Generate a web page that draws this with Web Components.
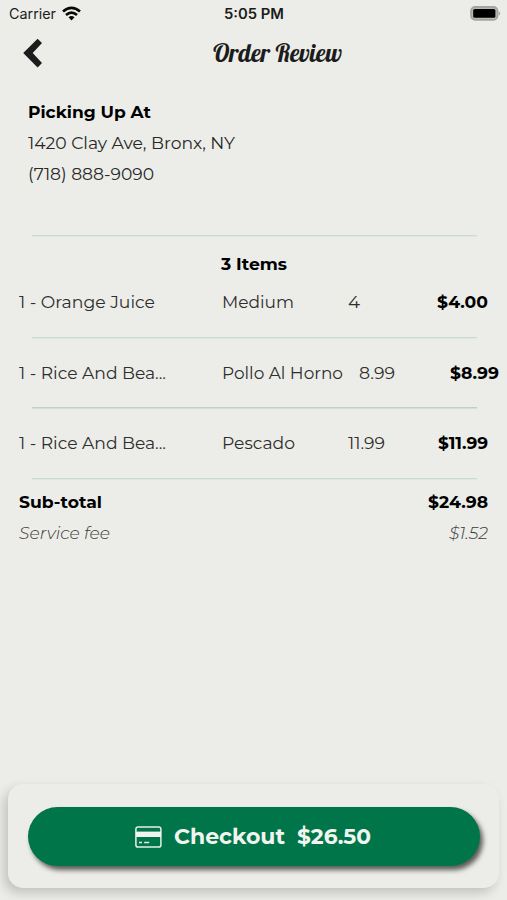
<!DOCTYPE html>
<html lang="en">
<head>
<meta charset="utf-8">
<title>Order Review</title>
<style>
body{
    margin: 0;
    background: #ecede8;
    font-family: Montserrat, Inter, "Open Sans", sans-serif;
}
</style>
</head>
<body>
<order-page></order-page>

<script>
function define(name, html, base = HTMLElement) {
  const template = document.createElement("template");
  template.innerHTML = html;
  window.customElements.define(name, class extends base {
    constructor() {
      super();
      this.attachShadow({ mode: "open" });
      this.shadowRoot.appendChild(template.content.cloneNode(true));
    }
  });
}

// text stretched to the width given in the "w" attribute
class FitText extends HTMLElement {
  connectedCallback() {
    const span = this.shadowRoot.querySelector("span");
    const width = Number(this.getAttribute("w"));
    this.style.width = width + "px";
    span.style.transform = "scaleX(" + width / span.getBoundingClientRect().width + ")";
  }
}
define("fit-text", `
<style>
:host{
    display: block;
    flex: none;
    white-space: nowrap;
}
span{
    display: inline-block;
    vertical-align: top;
    transform-origin: 0 50%;
}
</style>
<span><slot></slot></span>
`, FitText);

define("status-bar", `
<style>
:host{
    display: grid;
    grid-template-columns: 1fr auto 1fr;
    align-items: center;
    height: 28px;
    padding: 0 7px 0 8px;
    font: 14px/28px Inter, sans-serif;
    color: #1b1b1b;
}
.left{
    display: flex;
    align-items: center;
    gap: 6px;
    padding-left: 1px;
}
.time{
    font-weight: 600;
}
.battery{
    justify-self: end;
    margin-right: -1px;
}
svg{
    display: block;
    margin-bottom: 2px;
}
</style>
<div class="left">
  <fit-text w="47">Carrier</fit-text>
  <svg width="19" height="15" viewBox="0 0 19 15" fill="none" stroke="#080808" stroke-width="2.7">
    <path d="M1 5.6 Q9.5 -1.8 18 5.6"/>
    <path d="M4 9 Q9.5 4.3 15 9"/>
    <path d="M6.5 11.2 Q9.5 8.6 12.5 11.2 L9.5 14.4Z" fill="#080808" stroke="none"/>
  </svg>
</div>
<fit-text class="time" w="60">5:05 PM</fit-text>
<svg class="battery" width="31" height="15" viewBox="0 0 31 15">
  <rect x="1.1" y="1" width="26.4" height="12.8" rx="4" fill="#b9bab6" stroke="#a4a5a1" stroke-width="1.8"/>
  <rect x="3.2" y="3" width="22.2" height="8.8" rx="1.6" fill="#000"/>
  <path d="M28.7 5 Q31.5 7.4 28.7 9.8Z" fill="#a4a5a1"/>
</svg>
`);

define("nav-header", `
<style>
:host{
    display: grid;
    grid-template-columns: 190px auto 1fr;
    align-items: center;
    height: 50px;
    padding: 0 0 0 23px;
    color: #1c1c1c;
}
.title{
    font: 25px/50px Lobster, "Liberation Serif", serif;
}
svg{
    display: block;
    margin-bottom: 1px;
}
</style>
<svg width="20" height="30" viewBox="0 0 20 30">
  <path d="M14.6 .8 L19 5 L9.7 15 L19 25 L14.6 29.4 L.2 15Z" fill="#1c1c1c"/>
</svg>
<fit-text class="title" w="129">Order Review</fit-text>
`);

define("pickup-address", `
<style>
:host{
    display: block;
    padding: 19px 28px 45px;
    font-size: 16.8px;
    line-height: 31px;
    color: #282828;
}
::slotted([slot=label]){
    font-weight: 700;
    color: #000;
}
</style>
<slot name="label"></slot>
<slot></slot>
`);

define("line-divider", `
<style>
:host{
    display: block;
    height: 1px;
    margin: 0 30px 0 32px;
    background: #cbdad2;
    box-shadow: 0 1px 0 rgba(203, 218, 210, .35);
}
:host([strong]){
    background: #b9d3c8;
    box-shadow: 0 1px 0 rgba(185, 211, 200, .5);
}
</style>
`);

define("order-row", `
<style>
:host{
    display: flex;
    align-items: center;
    height: 70px;
    padding-left: 19px;
    font-size: 16.8px;
    color: #2e2e2e;
}
.name{
    flex: none;
    width: 203px;
}
.option{
    flex: none;
    min-width: 110px;
    margin-right: 16px;
}
.price{
    flex: none;
    display: flex;
    justify-content: space-between;
    width: 140px;
}
::slotted([slot=total]){
    font-weight: 700;
    color: #000;
}
</style>
<div class="name"><slot name="name"></slot></div>
<div class="option"><slot name="option"></slot></div>
<div class="price"><slot name="unit"></slot><slot name="total"></slot></div>
`);

define("sum-row", `
<style>
:host{
    display: flex;
    justify-content: space-between;
    padding: 0 19px;
    font-size: 16.8px;
    line-height: 31px;
    font-weight: 700;
    color: #000;
}
:host([fee]){
    font-weight: 300;
    font-style: italic;
    color: #3b3b3b;
}
</style>
<slot></slot>
`);

define("checkout-panel", `
<style>
:host{
    display: block;
    margin: 0 8px 12px;
    padding: 23px 19px 22px 20px;
    border-radius: 15px;
    background: #ecede8;
    box-shadow: -4px 5px 11px rgba(0, 0, 0, .18);
}
button{
    display: flex;
    align-items: center;
    justify-content: flex-start;
    width: 100%;
    height: 59px;
    padding: 0 0 0 107px;
    border: 0;
    border-radius: 30px;
    background: #00754a;
    box-shadow: 3px 4px 5px rgba(0, 0, 0, .62);
    color: #f1f5ef;
    font: 700 21.6px/59px Montserrat, Inter, sans-serif;
}
svg{
    display: block;
    margin-right: 11px;
}
.sum{
    margin-left: 13px;
}
</style>
<button>
  <svg width="27" height="22" viewBox="0 0 27 22">
    <rect x=".9" y=".9" width="25" height="20.2" rx="2.2" fill="none" stroke="#e5f0e8" stroke-width="1.5"/>
    <rect x="1" y="5.6" width="25" height="5.4" fill="#f1f5ef"/>
    <path d="M4 16.6h3M9.2 16.6h5" stroke="#e5f0e8" stroke-width="1.5"/>
  </svg>
  <fit-text w="111">Checkout</fit-text>
  <fit-text class="sum" w="74">$26.50</fit-text>
</button>
`);

define("order-page", `
<style>
:host{
    display: flex;
    flex-direction: column;
    width: 507px;
    height: 900px;
    overflow: hidden;
    background: #ecede8;
}
.count{
    display: flex;
    justify-content: center;
    height: 30px;
    padding-top: 13px;
    font-size: 16.8px;
    line-height: 31px;
    font-weight: 700;
    color: #000;
}
.first{
    height: 46px;
    padding-bottom: 12px;
}
.second{
    height: 69px;
}
.totals{
    padding-top: 8px;
}
checkout-panel{
    margin-top: auto;
}
</style>
<status-bar></status-bar>
<nav-header></nav-header>
<pickup-address>
  <fit-text slot="label" w="123">Picking Up At</fit-text>
  <fit-text w="207">1420 Clay Ave, Bronx, NY</fit-text>
  <fit-text w="126">(718) 888-9090</fit-text>
</pickup-address>
<line-divider></line-divider>
<div class="count"><fit-text w="66">3 Items</fit-text></div>
<order-row class="first">
  <fit-text slot="name" w="136">1 - Orange Juice</fit-text>
  <fit-text slot="option" w="72">Medium</fit-text>
  <fit-text slot="unit" w="12">4</fit-text>
  <fit-text slot="total" w="51">$4.00</fit-text>
</order-row>
<line-divider></line-divider>
<order-row class="second">
  <fit-text slot="name" w="147">1 - Rice And Bea...</fit-text>
  <fit-text slot="option" w="121">Pollo Al Horno</fit-text>
  <fit-text slot="unit" w="36">8.99</fit-text>
  <fit-text slot="total" w="49">$8.99</fit-text>
</order-row>
<line-divider strong></line-divider>
<order-row>
  <fit-text slot="name" w="147">1 - Rice And Bea...</fit-text>
  <fit-text slot="option" w="73">Pescado</fit-text>
  <fit-text slot="unit" w="37">11.99</fit-text>
  <fit-text slot="total" w="50">$11.99</fit-text>
</order-row>
<line-divider></line-divider>
<div class="totals">
  <sum-row>
    <fit-text w="83">Sub-total</fit-text>
    <fit-text w="60">$24.98</fit-text>
  </sum-row>
  <sum-row fee>
    <fit-text w="91">Service fee</fit-text>
    <fit-text w="39">$1.52</fit-text>
  </sum-row>
</div>
<checkout-panel></checkout-panel>
`);
</script>
</body>
</html>
